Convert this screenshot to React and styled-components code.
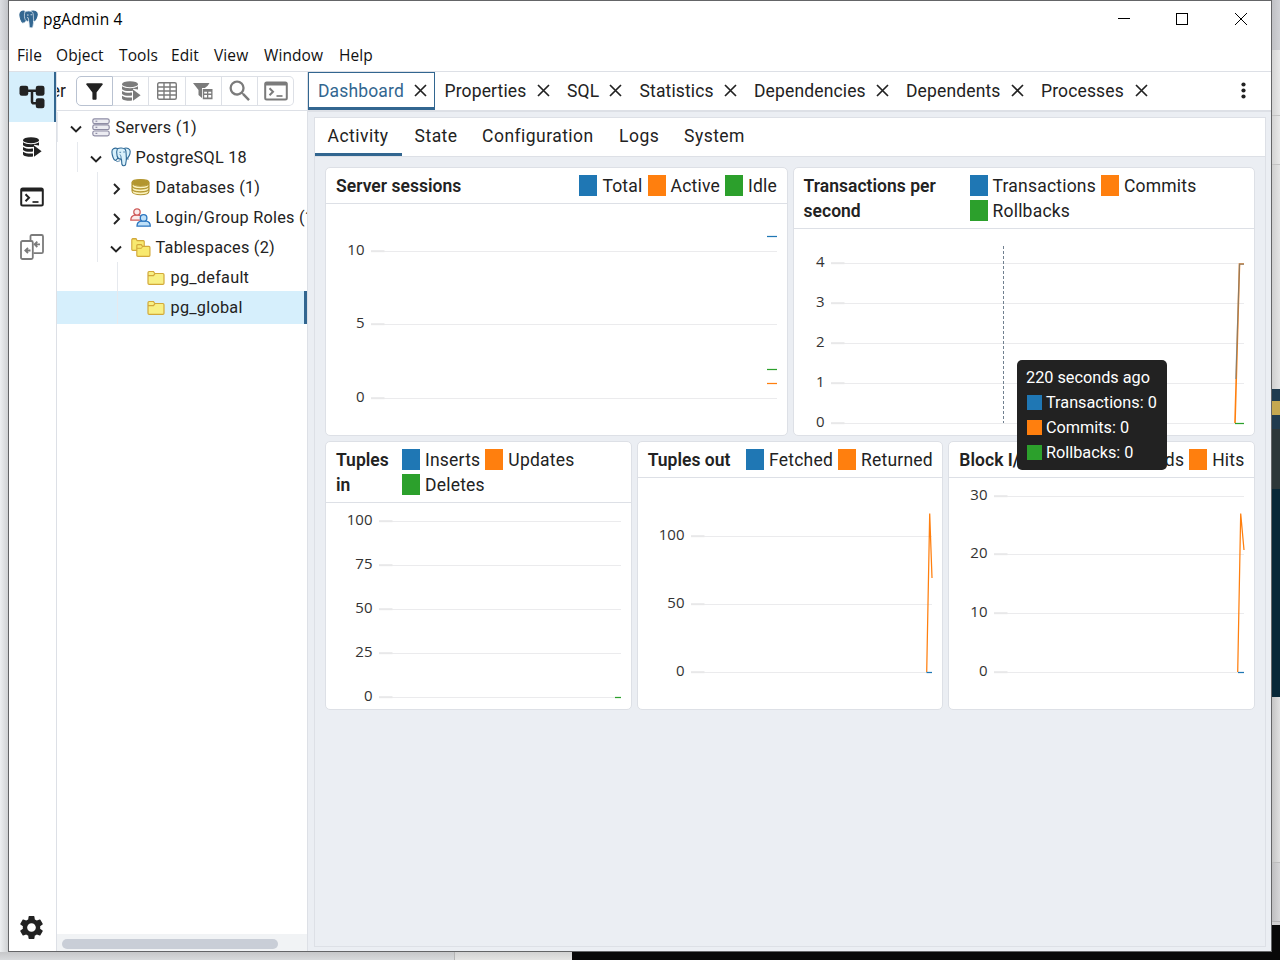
import React from "react";
import styled, { createGlobalStyle, css } from "styled-components";
import { MdFilterAlt, MdSearch, MdSettings } from "react-icons/md";

const BLUE = "#1f77b4";
const ORANGE = "#ff7f0e";
const GREEN = "#2ca02c";

const GlobalStyle = createGlobalStyle`
  * {
    box-sizing: border-box;
  }
  body {
    margin: 0;
    overflow: hidden;
    font-family: Roboto, "Liberation Sans", sans-serif;
    font-size: 17.5px;
    color: #222222;
  }
  svg {
    display: block;
    flex: none;
  }
`;

/* desktop behind the window */
const Desktop = styled.div`
  display: grid;
  grid-template-columns: 8px 1264px 8px;
  grid-template-rows: 952px 8px;
  width: 1280px;
  height: 960px;
`;
const EdgeColumn = styled.div`
  display: flex;
  flex-direction: column;
`;
const EdgeRow = styled.div`
  display: flex;
  grid-column: 1 / 4;
`;
const Patch = styled.div`
  flex: 0 0 ${(p) => p.$size}px;
  background: ${(p) => p.$color};
`;

const Window = styled.div`
  display: flex;
  flex-direction: column;
  border: 1px solid #646567;
  background-color: #ffffff;
  overflow: hidden;
`;
const TitleBar = styled.header`
  display: flex;
  align-items: center;
  height: 38px;
  padding: 0 1px 2px 10px;
  font-family: "Open Sans", "Noto Sans", sans-serif;
  font-size: 15.5px;
  color: #000000;
`;
const TitleText = styled.span`
  flex: 1;
  padding-left: 5px;
  letter-spacing: 0.2px;
`;
const WindowButton = styled.div`
  display: flex;
  align-items: center;
  justify-content: center;
  width: 58.5px;
  height: 36px;
`;
const MenuBar = styled.nav`
  display: grid;
  grid-template-columns: 39px 63px 52px 43px 50px 75px 60px;
  align-items: center;
  height: 33px;
  padding-left: 8px;
  border-bottom: 1px solid #dde0e6;
  font-family: "Open Sans", "Noto Sans", sans-serif;
  font-size: 15.5px;
  letter-spacing: 0.1px;
  color: #111111;
`;
const Workspace = styled.div`
  display: flex;
  flex: 1;
  min-height: 0;
`;

const Rail = styled.aside`
  display: flex;
  flex-direction: column;
  width: 48px;
  border-right: 1px solid #dde0e6;
`;
const RailItem = styled.div`
  display: flex;
  align-items: center;
  justify-content: center;
  height: 50px;
  padding-right: 2px;
  ${(p) =>
    p.$active &&
    css`
      background-color: #d6effc;
      box-shadow: inset -2px 0 0 #326690;
    `}
  ${(p) =>
    p.$last &&
    css`
      margin-top: auto;
      margin-bottom: -1px;
    `}
`;

const Sidebar = styled.section`
  display: flex;
  flex-direction: column;
  width: 250px;
  overflow: hidden;
`;
const SidebarHead = styled.div`
  display: flex;
  align-items: center;
  height: 39px;
  border-bottom: 1px solid #dde0e6;
`;
const SidebarTitle = styled.div`
  display: flex;
  justify-content: flex-end;
  width: 9px;
  margin-right: 10px;
  overflow: hidden;
  white-space: nowrap;
`;
const ButtonGroup = styled.div`
  display: flex;
  height: 30px;
`;
const ToolButton = styled.div`
  display: flex;
  align-items: center;
  justify-content: center;
  width: ${(p) => (p.$active ? 37 : 36.3)}px;
  border: 1px solid ${(p) => (p.$active ? "#b9c2d1" : "#dde0e6")};
  ${(p) => !p.$active && "border-left: 0;"}
  color: ${(p) => (p.$active ? "#222222" : "#7b7b7b")};

  &:first-child {
    border-radius: 5px 0 0 5px;
  }
  &:last-child {
    border-radius: 0 5px 5px 0;
  }
`;
const Tree = styled.div`
  flex: 1;
  padding-top: 1px;
`;
const TreeRow = styled.div`
  height: ${(p) => (p.$selected ? 33 : 30)}px;
  ${(p) =>
    p.$selected &&
    css`
      margin-top: -1px;
      background-color: #d6effc;
      box-shadow: inset -3px 0 0 #326690;
    `}
`;
const TreeNode = styled.div`
  display: flex;
  align-items: center;
  height: 100%;
  margin-left: ${(p) => p.$depth * 20}px;
  border-left: 1px solid #e6e9ee;
  font-size: 16.25px;
  letter-spacing: 0.26px;
  white-space: nowrap;
`;
const Chevron = styled.div`
  display: flex;
  flex: none;
  justify-content: center;
  width: ${(p) => (p.$leaf ? 28.5 : 33.5)}px;
  padding: 3px 5px 0 8px;
`;
const NodeIcon = styled.div`
  display: flex;
  flex: none;
  justify-content: center;
  width: 18px;
  margin-right: 6px;
`;
const ScrollTrack = styled.div`
  height: 17px;
  padding: 5px 0 2px 5px;
  background-color: #f1f3f5;
`;
const ScrollThumb = styled.div`
  width: 216px;
  height: 10px;
  border-radius: 5px;
  background-color: #c9ced7;
`;

const Main = styled.main`
  display: flex;
  flex: 1;
  flex-direction: column;
  min-width: 0;
  border-left: 1px solid #dde0e6;
  background-color: #ebeef3;
`;
const TabBar = styled.div`
  display: flex;
  height: 40px;
  border-bottom: 2px solid #dde0e6;
  background-color: #ffffff;
`;
const Tab = styled.div`
  display: flex;
  align-items: center;
  justify-content: space-between;
  width: ${(p) => p.$width}px;
  padding: 1px 6.5px 0 9px;
  border: 1px solid transparent;
  border-bottom-width: 3px;
  letter-spacing: 0.14px;
  ${(p) =>
    p.$active &&
    css`
      border-color: #326690;
      color: #326690;
    `}
`;
const TabMore = styled.div`
  display: flex;
  align-items: center;
  margin-left: auto;
  padding: 0 25px 1px 0;
`;
const Panel = styled.div`
  flex: 1;
  margin: 5px 5px 4px 6px;
  border: 1px solid #dde0e6;
`;
const SubTabs = styled.div`
  display: flex;
  height: 39px;
  border-bottom: 1px solid #dde0e6;
  background-color: #ffffff;
`;
const SubTab = styled.div`
  width: ${(p) => p.$width}px;
  padding-left: 12.6px;
  line-height: 36px;
  letter-spacing: 0.46px;
  border-bottom: 3px solid ${(p) => (p.$active ? "#326690" : "transparent")};
`;
const CardGrid = styled.div`
  display: grid;
  grid-template-columns: repeat(${(p) => p.$columns}, 1fr);
  gap: 5px;
  margin: ${(p) => (p.$columns === 2 ? "10px" : "5px")} 10px 0;
`;
const Card = styled.article`
  display: flex;
  flex-direction: column;
  min-width: 0;
  height: 269px;
  border: 1px solid #dde0e6;
  border-radius: 5px;
  background-color: #ffffff;
`;
const CardHead = styled.div`
  display: flex;
  padding: 6px 9.5px 4px 10px;
  border-bottom: 1px solid #dde0e6;
  line-height: 25px;
`;
const CardTitle = styled.div`
  flex: none;
  width: ${(p) => (p.$width ? p.$width + "px" : "auto")};
  padding-right: ${(p) => (p.$width ? 10 : 0)}px;
  font-weight: 600;
  letter-spacing: 0.03px;
`;
const Legend = styled.div`
  display: flex;
  flex-wrap: wrap;
  column-gap: 5px;
  ${(p) => p.$end && "margin-left: auto;"}
`;
const LegendItem = styled.div`
  display: flex;
  align-items: center;
  gap: 5px;
  letter-spacing: 0.21px;
`;
const Swatch = styled.span`
  width: ${(p) => (p.$small ? 15 : 18)}px;
  height: ${(p) => (p.$small ? 15 : 21)}px;
  margin-top: ${(p) => (p.$small ? 0 : -2)}px;
  background-color: ${(p) => p.$color};
`;
const ChartBody = styled.div`
  position: relative;
  flex: 1;
  min-height: 0;
`;
const AxisText = styled.text`
  font-family: "Open Sans", "Noto Sans", sans-serif;
  font-size: 15px;
  fill: #333333;
`;
const Tooltip = styled.div`
  position: absolute;
  left: 223.5px;
  top: 131px;
  z-index: 2;
  width: 150px;
  height: 110px;
  padding: 5px 0 5px 9px;
  border-radius: 5px;
  background-color: #222222;
  color: #ffffff;
  font-size: 16.25px;
  line-height: 25px;
  white-space: nowrap;
`;
const TooltipRow = styled.div`
  display: flex;
  align-items: center;
  gap: 4px;
  padding-left: 1px;
`;

/* icons */
const ElephantIcon = ({ solid, size = 20 }) => (
  <svg
    width={size}
    height={size}
    viewBox="0 0 20 20"
    fill={solid ? "#336791" : "#d8f0fb"}
    stroke={solid ? "#336791" : "#2f6a97"}
    strokeWidth="1.1"
    strokeLinejoin="round"
    strokeLinecap="round"
  >
    <path d="M13 1.4c3-1 6.2.4 6.2 3.2 0 2.700-1.700 5.800-3.700 7.600L13 11z" />
    <path d="M6.500 1.500C3.200.5.8 1.800.9 5c.1 3.200 1.700 7.900 3.200 8.300 1.100.3 1.900-1.300 3-2.400z" />
    <path
      stroke={solid ? "#dbe7f0" : "#2f6a97"}
      strokeWidth={solid ? 0.8 : 1.1}
      d="M6.300 1.900c2-1.300 6-1.200 8 .5 1.300 2 .6 5.500 1.100 8.300.2 2-.5 4.400-.7 6.400-.2 2-3.200 2.200-3.700.4-.5-1.600-.1-4-.7-5.500C8.300 12.400 6.600 10.900 6.100 9c-.6-2.200-.6-5.100.2-7.100z"
    />
    <g fill="none" stroke={solid ? "#ffffff" : "#2f6a97"} strokeWidth="0.8">
      <path d="M8.800 5.300h.9M12.600 5h.9M9.900 12.200c.5-1.700.2-3.200-.8-4.500M15.200 12h2.300M4.200 13.300l2 1.200 2.800-.7" />
    </g>
  </svg>
);

const TreeViewIcon = () => (
  <svg width="30" height="30" viewBox="0 0 24 24" fill="#222222">
    <rect x="2" y="3" width="7" height="8" rx="1.800" />
    <rect x="15" y="3" width="7" height="8" rx="1.800" />
    <rect x="15" y="13" width="7" height="8" rx="1.800" />
    <path
      d="M8 7h8M12 7v8.500c0 1 .5 1.500 1.500 1.500H16"
      fill="none"
      stroke="#222222"
      strokeWidth="2"
    />
  </svg>
);

const QueryIcon = ({ color }) => (
  <svg width="20" height="20" viewBox="0 0 20 20" fill={color}>
    <ellipse cx="9" cy="3.200" rx="8" ry="3" />
    <path d="M1 5.200c3 2.600 13 2.600 16 0v3.200l-5-.6v2C7.500 10.400 2.600 9.900 1 8.200z" />
    <path d="M1 9.900c2.200 1.600 6.500 2.100 10 1.700v3C7 15.200 2.800 14.700 1 13z" />
    <path d="M1 14.700c2.200 1.600 6.500 2.100 10 1.700v3.100C6 20.200 1 19.300 1 17z" />
    <path d="M12 8.600l7.600 5.600-7.600 5.500z" />
  </svg>
);

const TerminalIcon = ({ color }) => (
  <svg width="24" height="20" viewBox="0 0 24 20" fill="none" stroke={color}>
    <rect x="1.200" y="1.500" width="21.600" height="17" rx="1.500" strokeWidth="2" />
    <path d="M1 3.200h22" strokeWidth="2.600" />
    <path d="M5.500 7.300l3.500 3.500-3.500 3.500" strokeWidth="2" />
    <path d="M12.500 15h6" strokeWidth="1.700" />
  </svg>
);

const CompareIcon = () => (
  <svg width="24" height="26" viewBox="0 0 24 26" fill="none" stroke="#7b7b7b" strokeWidth="1.800">
    <path d="M10.500 6.500V2.500c0-.8.500-1.500 1.400-1.500h9.700c.9 0 1.400.7 1.400 1.500v15.200c0 .8-.5 1.400-1.400 1.400H13.500" />
    <rect x="1" y="7" width="11.800" height="18" rx="1.500" />
    <path d="M20 10.300h-5M17.300 7.600l-2.700 2.700 2.700 2.700M10.500 16.500h-5M8 13.800l-2.700 2.700L8 19.200" />
  </svg>
);

const GridIcon = () => (
  <svg width="20" height="18" viewBox="0 0 20 18" fill="none" stroke="#7b7b7b" strokeWidth="1.400">
    <rect x=".7" y=".7" width="18.600" height="16.600" rx="1.500" />
    <path d="M1 5h18M1 9h18M1 13h18M7 1v16M13 1v16" />
  </svg>
);

const FilterGridIcon = () => (
  <svg width="20" height="17" viewBox="0 0 20 17" fill="#7b7b7b">
    <path d="M0 0h16.500l-1.800 2.800-3.500 2.700H9v9.500L5.500 12V7z" />
    <path fill="#ffffff" d="M9 5h11v12H9z" />
    <path
      fillRule="evenodd"
      d="M9.800 5.900h9.700v10.300H9.800zM11.200 8.700v1.800h2.800V8.700zm4.100 0v1.800h2.900V8.700zM11.200 12v2.600h2.800V12zm4.100 0v2.600h2.900V12z"
    />
  </svg>
);

const ServersIcon = () => (
  <svg width="18" height="19" viewBox="0 0 18 19" fill="#ececf2" stroke="#8f8da5" strokeWidth="1.200">
    {[0.8, 6.9, 13].map((y) => (
      <g key={y}>
        <rect x=".8" y={y} width="16.400" height="4.800" rx="1.800" />
        <path d={`M3.500 ${y + 2.4}h1.800`} />
      </g>
    ))}
  </svg>
);

const DatabasesIcon = () => (
  <svg width="19" height="17" viewBox="0 0 19 17" fill="#fbf3c0" stroke="#b3962f" strokeWidth="1.100">
    <path d="M1 9.200c0 5 17 5 17 0v2.800c0 5-17 5-17 0z" />
    <path d="M1 6.200c0 5 17 5 17 0v2.800c0 5-17 5-17 0z" />
    <path d="M1 3.500c0 5 17 5 17 0v2.500c0 5-17 5-17 0z" />
    <ellipse cx="9.500" cy="3.500" rx="8.500" ry="2.900" fill="#b3962f" />
  </svg>
);

const RolesIcon = () => (
  <svg width="21" height="19" viewBox="0 0 21 19" strokeWidth="1.300">
    <g fill="#fbeceb" stroke="#cf5c5b">
      <path d="M.8 12.200c0-3.200 2-4.600 4-5h4c2 .4 3.500 1.800 3.500 5z" />
      <circle cx="7" cy="4" r="3.200" />
    </g>
    <g fill="#bfe0f8" stroke="#2b76c0">
      <path d="M7 18.200c0-3.200 2-4.600 4-5h5.500c2 .4 3.800 1.800 3.800 5z" />
      <circle cx="13.600" cy="9.900" r="3.300" />
    </g>
  </svg>
);

const folder =
  "M1 2.800c0-.8.400-1.300 1.200-1.300h4.300l1.300 2h8c.8 0 1.200.4 1.200 1.200v8.500c0 .8-.4 1.200-1.200 1.200H2.200c-.8 0-1.200-.4-1.200-1.200z";

const FolderIcon = () => (
  <svg width="18" height="15" viewBox="0 0 18 15" fill="#f8f084" stroke="#d2a83a" strokeWidth="1.200">
    <path d={folder} />
    <path d="M1 5.600h5.500l1.500-2" fill="none" />
  </svg>
);

const FoldersIcon = () => (
  <svg width="20" height="19" viewBox="0 0 20 19" fill="#f8e96f" stroke="#d2a83a">
    <path strokeWidth="1.400" transform="translate(0 -.6) scale(.78 .9)" d={folder} />
    <path strokeWidth="1.400" transform="translate(5 5.300) scale(.82 .9)" d={folder} />
    <path strokeWidth="1" d="M6 10.300h4.500l1-1.800" fill="none" />
  </svg>
);

const CloseIcon = () => (
  <svg width="13" height="13" viewBox="0 0 13 13" stroke="#222222" strokeWidth="1.700">
    <path d="M1 1l11 11M12 1L1 12" />
  </svg>
);

const ChevronIcon = ({ open }) => (
  <svg width="12" height="12" viewBox="0 0 12 12" fill="none" stroke="#222222" strokeWidth="1.900">
    <path d={open ? "M1 3.500l5 5 5-5" : "M4 1l5 5-5 5"} />
  </svg>
);

/* y positions are relative to the top of the chart area */
const Chart = ({ axis, right, ticks, children, height, width }) => (
  <svg width={width} height={height}>
    {ticks.map(([label, y]) => (
      <g key={label}>
        <AxisText x={axis - 6.5} y={y + 4} textAnchor="end">
          {label}
        </AxisText>
        <path d={`M${axis} ${y + 0.5}H${right}`} stroke="#ebebed" />
        <path d={`M${axis} ${y + 0.2}h13.500`} stroke="#e8e8e9" strokeWidth="2" />
      </g>
    ))}
    <g fill="none" strokeWidth="1.250">
      {children}
    </g>
  </svg>
);

const ChartCard = ({ title, titleWidth, legend, children }) => (
  <Card>
    <CardHead>
      <CardTitle $width={titleWidth}>{title}</CardTitle>
      <Legend $end={!titleWidth}>
        {legend.map(([name, color]) => (
          <LegendItem key={name}>
            <Swatch $color={color} />
            {name}
          </LegendItem>
        ))}
      </Legend>
    </CardHead>
    <ChartBody>{children}</ChartBody>
  </Card>
);

const nodes = [
  { label: "Servers (1)", depth: 0, open: true, icon: <ServersIcon /> },
  { label: "PostgreSQL 18", depth: 1, open: true, icon: <ElephantIcon /> },
  { label: "Databases (1)", depth: 2, open: false, icon: <DatabasesIcon /> },
  { label: "Login/Group Roles (1)", depth: 2, open: false, icon: <RolesIcon /> },
  { label: "Tablespaces (2)", depth: 2, open: true, icon: <FoldersIcon /> },
  { label: "pg_default", depth: 3, leaf: true, icon: <FolderIcon /> },
  { label: "pg_global", depth: 3, leaf: true, selected: true, icon: <FolderIcon /> },
];

const tabs = [
  ["Dashboard", 126.5],
  ["Properties", 122.5],
  ["SQL", 72.5],
  ["Statistics", 114.5],
  ["Dependencies", 152],
  ["Dependents", 135],
  ["Processes", 124],
];

const subTabs = [
  ["Activity", 87],
  ["State", 67.5],
  ["Configuration", 137],
  ["Logs", 65],
  ["System", 90],
];

const rightEdge = [
  [50, "linear-gradient(90deg, #bfc0c4, #d0d1d5)"],
  [65, "linear-gradient(90deg, #d3d3d3, #e8e8e8)"],
  [1, "#c4c4c4"],
  [48, "linear-gradient(90deg, #d3d3d3, #e8e8e8)"],
  [1, "#c4c4c4"],
  [224, "linear-gradient(90deg, #cfcfcf, #e4e4e4)"],
  [12, "#1f3b4f"],
  [14, "#c5a851"],
  [14, "#203b4f"],
  [60, "#2d3739"],
  [208, "#082838"],
  [165, "linear-gradient(90deg, #c4c4c4, #e0e0e0)"],
  [1, "#bdbdbd"],
  [58, "linear-gradient(90deg, #bebec0, #d6d6d8)"],
  [1, "#b4b4b4"],
  [3, "#d0d0d0"],
  [27, "#080808"],
];

const App = () => (
  <>
    <GlobalStyle />
    <Desktop>
      <EdgeColumn>
        <Patch $size={50} $color="linear-gradient(90deg, #dcdee2, #c2c4c8)" />
        <Patch $size={902} $color="linear-gradient(90deg, #edeff1, #cfd1d3)" />
      </EdgeColumn>
      <Window>
        <TitleBar>
          <ElephantIcon solid size={19} />
          <TitleText>pgAdmin 4</TitleText>
          <WindowButton>
            <svg width="12" height="12" stroke="#000000">
              <path d="M0 5.500h12" />
            </svg>
          </WindowButton>
          <WindowButton>
            <svg width="12" height="12" stroke="#000000" fill="none">
              <rect x=".5" y=".5" width="11" height="11" />
            </svg>
          </WindowButton>
          <WindowButton>
            <svg width="12" height="12" stroke="#000000">
              <path d="M0 0l12 12M12 0L0 12" />
            </svg>
          </WindowButton>
        </TitleBar>
        <MenuBar>
          {["File", "Object", "Tools", "Edit", "View", "Window", "Help"].map((item) => (
            <span key={item}>{item}</span>
          ))}
        </MenuBar>
        <Workspace>
          <Rail>
            <RailItem $active>
              <TreeViewIcon />
            </RailItem>
            <RailItem>
              <QueryIcon color="#222222" />
            </RailItem>
            <RailItem>
              <TerminalIcon color="#222222" />
            </RailItem>
            <RailItem>
              <CompareIcon />
            </RailItem>
            <RailItem $last>
              <MdSettings size={29} color="#222222" />
            </RailItem>
          </Rail>
          <Sidebar>
            <SidebarHead>
              <SidebarTitle>Object Explorer</SidebarTitle>
              <ButtonGroup>
                <ToolButton $active>
                  <MdFilterAlt size={25} />
                </ToolButton>
                <ToolButton>
                  <QueryIcon color="#7b7b7b" />
                </ToolButton>
                <ToolButton>
                  <GridIcon />
                </ToolButton>
                <ToolButton>
                  <FilterGridIcon />
                </ToolButton>
                <ToolButton>
                  <MdSearch size={28} />
                </ToolButton>
                <ToolButton>
                  <TerminalIcon color="#7b7b7b" />
                </ToolButton>
              </ButtonGroup>
            </SidebarHead>
            <Tree>
              {nodes.map((node) => (
                <TreeRow key={node.label} $selected={node.selected}>
                  <TreeNode $depth={node.depth}>
                    <Chevron $leaf={node.leaf}>
                      {!node.leaf && <ChevronIcon open={node.open} />}
                    </Chevron>
                    <NodeIcon>{node.icon}</NodeIcon>
                    {node.label}
                  </TreeNode>
                </TreeRow>
              ))}
            </Tree>
            <ScrollTrack>
              <ScrollThumb />
            </ScrollTrack>
          </Sidebar>
          <Main>
            <TabBar>
              {tabs.map(([name, width], i) => (
                <Tab key={name} $width={width} $active={i === 0}>
                  {name}
                  <CloseIcon />
                </Tab>
              ))}
              <TabMore>
                <svg width="5" height="17" fill="#222222">
                  <circle cx="2.500" cy="2.500" r="2.100" />
                  <circle cx="2.500" cy="8.500" r="2.100" />
                  <circle cx="2.500" cy="14.500" r="2.100" />
                </svg>
              </TabMore>
            </TabBar>
            <Panel>
              <SubTabs>
                {subTabs.map(([name, width], i) => (
                  <SubTab key={name} $width={width} $active={i === 0}>
                    {name}
                  </SubTab>
                ))}
              </SubTabs>
              <CardGrid $columns={2}>
                <ChartCard
                  title="Server sessions"
                  legend={[["Total", BLUE], ["Active", ORANGE], ["Idle", GREEN]]}
                >
                  <Chart
                    width={460}
                    height={230}
                    axis={45}
                    right={451}
                    ticks={[["10", 47], ["5", 120], ["0", 194]]}
                  >
                    <path d="M441 32.500h10" stroke={BLUE} />
                    <path d="M441 165.500h10" stroke={GREEN} />
                    <path d="M441 179.500h10" stroke={ORANGE} />
                  </Chart>
                </ChartCard>
                <ChartCard
                  title="Transactions per second"
                  titleWidth={166}
                  legend={[["Transactions", BLUE], ["Commits", ORANGE], ["Rollbacks", GREEN]]}
                >
                  <Chart
                    width={460}
                    height={204}
                    axis={37}
                    right={450}
                    ticks={[["4", 34], ["3", 74], ["2", 114], ["1", 154], ["0", 194]]}
                  >
                    <path d="M441 194l4.500-159h4.500" stroke={ORANGE} strokeWidth="1.600" />
                    <path d="M441.800 150l3.700-115h4.500" stroke={BLUE} opacity=".5" />
                    <path d="M441 194.500h9" stroke={GREEN} />
                    <path
                      d="M209.500 17v177"
                      stroke="#708090"
                      strokeWidth="1"
                      strokeDasharray="3 2"
                    />
                  </Chart>
                  <Tooltip>
                    <div>220 seconds ago</div>
                    <TooltipRow>
                      <Swatch $small $color={BLUE} />
                      Transactions: 0
                    </TooltipRow>
                    <TooltipRow>
                      <Swatch $small $color={ORANGE} />
                      Commits: 0
                    </TooltipRow>
                    <TooltipRow>
                      <Swatch $small $color={GREEN} />
                      Rollbacks: 0
                    </TooltipRow>
                  </Tooltip>
                </ChartCard>
              </CardGrid>
              <CardGrid $columns={3}>
                <ChartCard
                  title="Tuples in"
                  titleWidth={66}
                  legend={[["Inserts", BLUE], ["Updates", ORANGE], ["Deletes", GREEN]]}
                >
                  <Chart
                    width={304}
                    height={204}
                    axis={53}
                    right={295}
                    ticks={[["100", 18], ["75", 62], ["50", 106], ["25", 150], ["0", 194]]}
                  >
                    <path d="M289 194.500h6" stroke={GREEN} />
                  </Chart>
                </ChartCard>
                <ChartCard title="Tuples out" legend={[["Fetched", BLUE], ["Returned", ORANGE]]}>
                  <Chart
                    width={304}
                    height={229}
                    axis={53}
                    right={294}
                    ticks={[["100", 58], ["50", 126], ["0", 194]]}
                  >
                    <path d="M288.700 194l3-158.500L294 100" stroke={ORANGE} />
                    <path d="M288.500 194.500h5.500" stroke={BLUE} />
                  </Chart>
                </ChartCard>
                <ChartCard title="Block I/O" legend={[["Reads", BLUE], ["Hits", ORANGE]]}>
                  <Chart
                    width={304}
                    height={229}
                    axis={45}
                    right={295}
                    ticks={[["30", 18], ["20", 76], ["10", 135], ["0", 194]]}
                  >
                    <path d="M288.700 194l3-158.500L295 72" stroke={ORANGE} />
                    <path d="M289 194.500h6" stroke={BLUE} />
                  </Chart>
                </ChartCard>
              </CardGrid>
            </Panel>
          </Main>
        </Workspace>
      </Window>
      <EdgeColumn>
        {rightEdge.map(([size, color], i) => (
          <Patch key={i} $size={size} $color={color} />
        ))}
      </EdgeColumn>
      <EdgeRow>
        <Patch $size={454} $color="linear-gradient(#c6c7c9, #d8dadc)" />
        <Patch $size={1} $color="#b4b4b4" />
        <Patch $size={117} $color="linear-gradient(#d2d2d2, #e4e4e3)" />
        <Patch $size={708} $color="#080808" />
      </EdgeRow>
    </Desktop>
  </>
);

export default App;
